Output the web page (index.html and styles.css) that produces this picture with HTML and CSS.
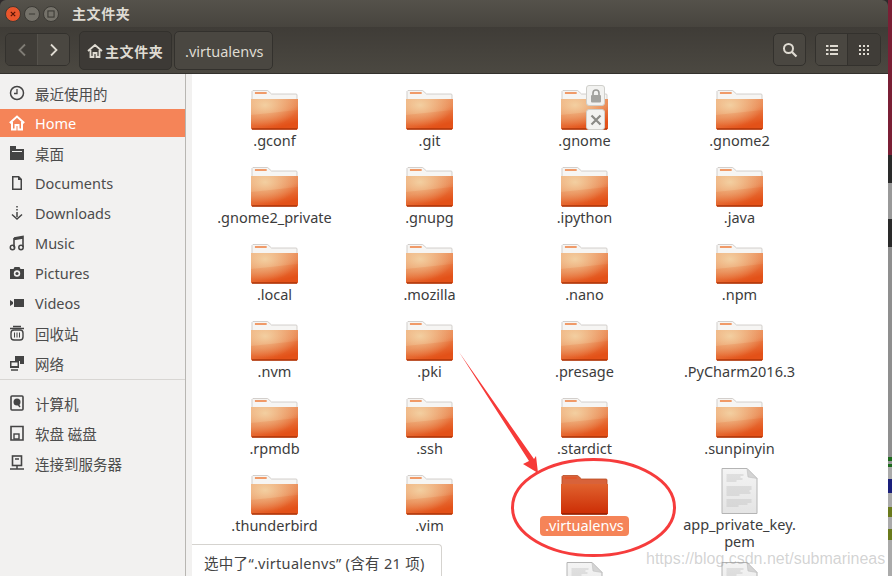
FILE: index.html
```html
<!DOCTYPE html>
<html lang="zh">
<head>
<meta charset="utf-8">
<title>主文件夹</title>
<link rel="stylesheet" href="styles.css">
</head>
<body>
<svg class="defs" width="0" height="0">
  <defs>
    <linearGradient id="fb" x1="0" y1="0" x2="0.45" y2="1">
      <stop offset="0" stop-color="#efa674"/><stop offset="0.55" stop-color="#ea8a55"/><stop offset="1" stop-color="#e4521a"/>
    </linearGradient>
    <radialGradient id="glow" cx="0.3" cy="0.2" r="0.7">
      <stop offset="0" stop-color="#f3d2a4" stop-opacity=".95"/><stop offset="1" stop-color="#f3cf9f" stop-opacity="0"/>
    </radialGradient>
    <linearGradient id="fs" x1="0" y1="0" x2="0" y2="1">
      <stop offset="0" stop-color="#e0622e"/><stop offset="1" stop-color="#cc2c04"/>
    </linearGradient>
    <linearGradient id="dg" x1="0" y1="0" x2="0" y2="1">
      <stop offset="0" stop-color="#f4f4f4"/><stop offset="1" stop-color="#e4e4e4"/>
    </linearGradient>
    <symbol id="folder" viewBox="0 0 48 40" preserveAspectRatio="none">
      <path d="M2 .5h15l4 3.500h25a1 1 0 0 1 1 1V10H1V1.500z" fill="#f6f5f3" stroke="#c8c4c0" stroke-width=".8"/>
      <rect x="4" y="2" width="12" height="2" fill="#f09a68"/>
      <path d="M0 9h48v29.500l-1 1H1l-1-1z" fill="url(#fb)"/>
      <path d="M0 9h48v29.500l-1 1H1l-1-1z" fill="url(#glow)"/>
      <path d="M0 25L48 20v18.500H0z" fill="#e4500f" opacity=".14"/>
      <rect x="1" y="38.300" width="46" height="1.400" fill="#a83208"/>
    </symbol>
    <symbol id="folder-sel" viewBox="0 0 48 40" preserveAspectRatio="none">
      <path d="M2 .5h15l4 3.500h25a1 1 0 0 1 1 1V10H1V1.500z" fill="#d8623a" stroke="#b84a20" stroke-width=".8"/>
      <rect x="4" y="2" width="12" height="2" fill="#e0562a"/>
      <path d="M0 9h48v29.500l-1 1H1l-1-1z" fill="url(#fs)"/>
      <rect x="1" y="38.300" width="46" height="1.400" fill="#8c2004"/>
    </symbol>
    <symbol id="doc" viewBox="0 0 36 46">
      <path d="M.5.5h25l10 10v35H.5z" fill="url(#dg)" stroke="#b4b4b4"/>
      <path d="M25.500.5l1 8.500 9 1.500z" fill="#d4d4d4" stroke="#c0c0c0" stroke-width=".6"/>
      <path d="M5 7h17M5 9h14M5 11h16M5 13h10M5 19h25M5 21h25M5 23h23M5 25h24M5 27h13M5 32h25M5 34h25M5 36h21M5 38h12" stroke="#b4b4b4" stroke-width=".6"/>
    </symbol>
  </defs>
</svg>
<div class="window">
  <header class="titlebar">
    <div class="wm">
      <span class="wm-btn close"><svg viewBox="0 0 16 16"><path d="M5.500 5.500l5 5m0-5l-5 5" stroke="#5a1406" stroke-width="1.400"/></svg></span>
      <span class="wm-btn"><svg viewBox="0 0 16 16"><path d="M4.500 8h7" stroke="#3a3833" stroke-width="1.400"/></svg></span>
      <span class="wm-btn"><svg viewBox="0 0 16 16"><rect x="4.500" y="4.500" width="7" height="7" fill="none" stroke="#3a3833" stroke-width="1.200"/></svg></span>
    </div>
    <span class="title">主文件夹</span>
  </header>
  <div class="toolbar">
    <div class="btn-group nav">
      <span class="tool back"><svg width="10" height="14" viewBox="0 0 10 14"><path d="M8 1.500L2.500 7 8 12.500" fill="none" stroke="#7f7c75" stroke-width="1.800"/></svg></span>
      <span class="tool fwd"><svg width="10" height="14" viewBox="0 0 10 14"><path d="M2 1.500L7.500 7 2 12.500" fill="none" stroke="#dfdbd2" stroke-width="1.800"/></svg></span>
    </div>
    <div class="path">
      <span class="crumb active"><svg width="16" height="14" viewBox="0 0 16 14"><path d="M1 7l7-6 7 6M3.500 6v7h3V9h3v4h3V6" fill="none" stroke="#dfdbd2" stroke-width="1.800"/></svg>主文件夹</span>
      <span class="crumb">.virtualenvs</span>
    </div>
    <div class="spacer"></div>
    <span class="tool-single"><svg width="16" height="16" viewBox="0 0 16 16"><circle cx="6.500" cy="6.500" r="4.500" fill="none" stroke="#dfdbd2" stroke-width="2"/><path d="M10 10l4.500 4.500" stroke="#dfdbd2" stroke-width="2.200"/></svg></span>
    <div class="btn-group views">
      <span class="tool"><svg width="12" height="10" viewBox="0 0 12 10"><path d="M0 1h2.500M4 1h8M0 5h2.500M4 5h8M0 9h2.500M4 9h8" stroke="#dfdbd2" stroke-width="2"/></svg></span>
      <span class="tool on"><svg width="10" height="10" viewBox="0 0 10 10"><path d="M0 1h10M0 5h10M0 9h10" stroke="#dfdbd2" stroke-width="2" stroke-dasharray="2 2"/></svg></span>
    </div>
  </div>
  <div class="body">
    <nav class="sidebar">
      <ul class="places">
        <li><svg class="ic" viewBox="0 0 16 16"><circle cx="8" cy="8" r="6.500" fill="none" stroke="#444" stroke-width="1.500"/><path d="M8 4v4.500H5" fill="none" stroke="#444" stroke-width="1.300"/></svg>最近使用的</li>
        <li class="current"><svg class="ic" viewBox="0 0 16 16"><path d="M.8 8L8 1.500 15.200 8M3 7v7.500h3.500V10h3v4.500H13V7" fill="none" stroke="#fff" stroke-width="2"/></svg>Home</li>
        <li><svg class="ic" viewBox="0 0 16 16"><path d="M1 1h6v3h8v11H1z" fill="#444"/><path d="M3 6h10v1H3z" fill="#f2f1f0"/></svg>桌面</li>
        <li><svg class="ic" viewBox="0 0 16 16"><path d="M3 1h7l3 3v11H3zM4.500 2.500v11h7V5H9V2.500z" fill="#444" fill-rule="evenodd"/></svg>Documents</li>
        <li><svg class="ic" viewBox="0 0 16 16"><path d="M8 1v1.500M8 4v1.500M8 7v5" stroke="#444" stroke-width="1.500"/><path d="M3 9.500L8 14l5-4.500" fill="none" stroke="#444" stroke-width="1.500"/></svg>Downloads</li>
        <li><svg class="ic" viewBox="0 0 16 16"><path d="M5 3l9-1.500V12M5 3v9.500M5 4.500L14 3" fill="none" stroke="#444" stroke-width="1.600"/><circle cx="3.500" cy="12.500" r="2.200" fill="none" stroke="#444" stroke-width="1.500"/><circle cx="12" cy="12.500" r="2.200" fill="none" stroke="#444" stroke-width="1.500"/></svg>Music</li>
        <li><svg class="ic" viewBox="0 0 16 16"><path d="M1 4h3.500l1-2h5l1 2H15v10H1z" fill="#444"/><circle cx="8" cy="8.500" r="3.200" fill="#f2f1f0"/><circle cx="8" cy="8.500" r="1.600" fill="#444"/></svg>Pictures</li>
        <li><svg class="ic" viewBox="0 0 16 16"><rect x="5" y="4" width="10" height="8" fill="#444"/><path d="M1 5v6l3-2V7z" fill="#444"/></svg>Videos</li>
        <li><svg class="ic" viewBox="0 0 16 16"><path d="M4 1.500h8M1 3.500h14" stroke="#444" stroke-width="1.300"/><rect x="2" y="5" width="12" height="10" rx="3" fill="none" stroke="#444" stroke-width="1.400"/><path d="M5.500 7.500v5M8 7.500v5M10.500 7.500v5" stroke="#444"/></svg>回收站</li>
        <li><svg class="ic" viewBox="0 0 16 16"><path d="M6 1h9v8h-4V6H6z" fill="#444"/><rect x="1" y="6" width="9" height="7" fill="#444"/><rect x="2.500" y="7.500" width="6" height="3.500" fill="#f2f1f0"/><path d="M2 15h7" stroke="#444" stroke-width="1.500"/></svg>网络</li>
      </ul>
      <ul class="places devices">
        <li><svg class="ic" viewBox="0 0 16 16"><rect x="2" y="1" width="12" height="14" rx="1" fill="none" stroke="#444" stroke-width="1.600"/><circle cx="8" cy="7" r="3.500" fill="#444"/><path d="M8 8l3 4" stroke="#444" stroke-width="1.400"/></svg>计算机</li>
        <li><svg class="ic" viewBox="0 0 16 16"><path d="M2 1.500h12V15H2z" fill="none" stroke="#444" stroke-width="1.600"/><rect x="5" y="9" width="5" height="5" fill="none" stroke="#444" stroke-width="1.400"/></svg>软盘 磁盘</li>
        <li><svg class="ic" viewBox="0 0 16 16"><rect x="3.500" y="1" width="9" height="9.500" fill="none" stroke="#444" stroke-width="1.600"/><path d="M6 4h4M8 10.500v3M1 14h14" stroke="#444" stroke-width="1.500"/></svg>连接到服务器</li>
      </ul>
    </nav>
    <div class="sash"></div>
    <main class="files">
      <div class="item"><svg class="folder"><use href="#folder"/></svg><span class="name">.gconf</span></div>
      <div class="item"><svg class="folder"><use href="#folder"/></svg><span class="name">.git</span></div>
      <div class="item"><svg class="folder"><use href="#folder"/></svg>
        <span class="emblem lock"><svg width="12" height="14" viewBox="0 0 12 14"><path d="M3 6V4a3 3 0 0 1 6 0v2" fill="none" stroke="#9a9a96" stroke-width="1.600"/><rect x="1" y="6" width="10" height="7.500" rx="1" fill="#a4a4a0"/></svg></span>
        <span class="emblem nowrite"><svg width="12" height="12" viewBox="0 0 12 12"><path d="M1.500 1.500l9 9m0-9l-9 9" stroke="#8a8a86" stroke-width="2.200"/></svg></span>
        <span class="name">.gnome</span></div>
      <div class="item"><svg class="folder"><use href="#folder"/></svg><span class="name">.gnome2</span></div>
      <div class="item"><svg class="folder"><use href="#folder"/></svg><span class="name">.gnome2_private</span></div>
      <div class="item"><svg class="folder"><use href="#folder"/></svg><span class="name">.gnupg</span></div>
      <div class="item"><svg class="folder"><use href="#folder"/></svg><span class="name">.ipython</span></div>
      <div class="item"><svg class="folder"><use href="#folder"/></svg><span class="name">.java</span></div>
      <div class="item"><svg class="folder"><use href="#folder"/></svg><span class="name">.local</span></div>
      <div class="item"><svg class="folder"><use href="#folder"/></svg><span class="name">.mozilla</span></div>
      <div class="item"><svg class="folder"><use href="#folder"/></svg><span class="name">.nano</span></div>
      <div class="item"><svg class="folder"><use href="#folder"/></svg><span class="name">.npm</span></div>
      <div class="item"><svg class="folder"><use href="#folder"/></svg><span class="name">.nvm</span></div>
      <div class="item"><svg class="folder"><use href="#folder"/></svg><span class="name">.pki</span></div>
      <div class="item"><svg class="folder"><use href="#folder"/></svg><span class="name">.presage</span></div>
      <div class="item"><svg class="folder"><use href="#folder"/></svg><span class="name">.PyCharm2016.3</span></div>
      <div class="item"><svg class="folder"><use href="#folder"/></svg><span class="name">.rpmdb</span></div>
      <div class="item"><svg class="folder"><use href="#folder"/></svg><span class="name">.ssh</span></div>
      <div class="item"><svg class="folder"><use href="#folder"/></svg><span class="name">.stardict</span></div>
      <div class="item"><svg class="folder"><use href="#folder"/></svg><span class="name">.sunpinyin</span></div>
      <div class="item"><svg class="folder"><use href="#folder"/></svg><span class="name">.thunderbird</span></div>
      <div class="item"><svg class="folder"><use href="#folder"/></svg><span class="name">.vim</span></div>
      <div class="item"><svg class="folder"><use href="#folder-sel"/></svg><span class="name selected">.virtualenvs</span></div>
      <div class="item tall"><svg class="docicon"><use href="#doc"/></svg><span class="name two-line">app_private_key.<br>pem</span></div>
      <div class="item"></div>
      <div class="item"></div>
      <div class="item"><svg class="docicon"><use href="#doc"/></svg></div>
      <div class="item"><svg class="docicon"><use href="#doc"/></svg></div>
    </main>
  </div>
</div>
<div class="desktop-edge"></div>
<div class="status">选中了“.virtualenvs” (含有 21 项)</div>
<svg class="annotation" width="892" height="576" viewBox="0 0 892 576">
  <path d="M459 352L534 459 536 456 538 473 523 464 529 461z" fill="#f63a38"/>
  <ellipse cx="593.500" cy="507.500" rx="81" ry="48" fill="none" stroke="#f63c3c" stroke-width="3"/>
</svg>
<div class="watermark">https://blog.csdn.net/submarineas</div>
</body>
</html>
```
FILE: styles.css
```css
* { box-sizing: border-box; }
html, body { margin: 0; height: 100%; overflow: hidden; }
body {
  width: 892px; height: 576px; position: relative; background: #2e2a2c;
  font-family: "Noto Sans", "Noto Sans CJK SC", sans-serif; font-size: 14.500px; color: #3c3c3c;
}
.defs { position: absolute; }
.window { width: 888px; height: 576px; display: flex; flex-direction: column; overflow: hidden; border-radius: 6px 6px 0 0; position: relative; z-index: 1; }
.titlebar {
  height: 27px; flex: none; display: flex; align-items: center; padding-left: 5px;
  background: linear-gradient(#55524b, #47443e); color: #dfdbd2;
}
.wm { display: flex; gap: 3px; width: 67px; }
.wm-btn {
  width: 16px; height: 16px; border-radius: 50%; background: #75726a; border: 1px solid #3c3a35; display: block; overflow: hidden;
}
.wm-btn svg { display: block; width: 14px; height: 14px; }
.wm-btn.close { background: #e9562c; }
.title { font-size: 14px; font-weight: 700; letter-spacing: .6px; line-height: 27px; }
.toolbar {
  height: 47px; flex: none; display: flex; align-items: center; padding: 0 7px 1px 5px;
  background: linear-gradient(#3f3c37, #4b4841); border-bottom: 1px solid #33312d;
}
.btn-group { display: flex; height: 33px; border: 1px solid #33312d; border-radius: 5px; overflow: hidden; }
.tool { width: 33px; display: flex; align-items: center; justify-content: center; background: #4a4741; }
.nav .back { width: 32px; background: #403d38; border-right: 1px solid #55524c; }
.nav .fwd { width: 31px; }
.path { display: flex; gap: 1px; margin-left: 9px; height: 41px; padding-top: 2px; }
.crumb {
  height: 39px; display: flex; align-items: center; gap: 2px; color: #dfdbd2;
  border: 1px solid #33312d; border-radius: 5px; background: #4a4741; font-size: 14.500px;
}
.crumb:last-child { padding: 0 8px 0 10px; width: 99px; margin-left: 1px; }
.crumb.active { background: #3d3a36; font-weight: 700; font-size: 14px; letter-spacing: .6px; padding: 0 7px; width: 93px; }
.spacer { flex: 1; }
.tool-single { width: 33px; height: 33px; display: flex; align-items: center; justify-content: center; border: 1px solid #33312d; border-radius: 5px; background: #4a4741; margin-right: 9px; }
.views .tool:first-child { width: 32px; border-right: 1px solid #33312d; }
.views .tool.on { background: #403d38; width: 32px; }
.body { flex: 1; display: flex; min-height: 0; }
.sidebar { width: 186px; flex: none; background: #f2f1f0; border-right: 1px solid #b8b6b2; padding-top: 4px; }
.sash { width: 6px; flex: none; background: #f2f1f0; }
.places { list-style: none; margin: 0; padding: 0; }
.places li { height: 30px; display: flex; align-items: center; gap: 10px; padding-left: 9px; color: #4c4c4c; font-size: 14.500px; }
.places li.current { height: 28px; margin: 1px 0; background: #f58458; color: #fff; }
.devices { border-top: 1px solid #d8d6d3; margin-top: 1px; padding-top: 8px; }
.ic { width: 16px; height: 16px; flex: none; }
.files {
  flex: 1; background: #fff; padding: 16px 0 0 5px; display: grid;
  grid-template-columns: repeat(4, 155px); grid-auto-rows: 77px; align-content: start; overflow: hidden; min-width: 0;
}
.item { position: relative; display: flex; flex-direction: column; align-items: center; }
.item.tall { height: 87px; }
.folder { width: 47px; height: 40px; display: block; flex: none; }
.docicon { width: 37px; height: 46px; flex: none; display: block; margin-top: -7px; margin-bottom: 1px; }
.files .item:nth-child(n+25) { margin-top: 17px; }
.name { font-size: 14.500px; line-height: 18px; margin-top: 1px; color: #3c3c3c; text-align: center; white-space: nowrap; }
.name.two-line { line-height: 17px; }
.name.selected { background: #f58458; color: #fff; border-radius: 4px; padding: 0 5px; height: 20px; margin-top: 1px; line-height: 19px; width: 89px; }
.emblem {
  position: absolute; left: 79px; width: 19px; height: 21px; background: #f2f2f0; border: 1px solid #cfcfcb; border-radius: 3px;
  display: flex; align-items: center; justify-content: center;
}
.emblem.lock { top: -5px; }
.emblem.nowrite { top: 19px; }
.desktop-edge {
  position: absolute; right: 0; top: 0; width: 4px; height: 576px;
  background: linear-gradient(#7a1f35 0 155px, #2a2a2a 155px 183px, #999 183px 219px, #2a2a2a 219px 247px, #8f8f8f 247px 457px, #1c6a1c 457px 461px, #999 461px 464px, #1c6a1c 464px 467px, #aaa 467px 479px, #1a1f7a 479px 493px, #aaa 493px 507px, #6a7a1c 507px 517px, #aaa 517px 529px, #6a7a1c 529px 540px, #aaa 540px);
}
.status {
  position: absolute; z-index: 2; left: 192px; top: 544px; width: 250px; height: 32px; padding: 7px 0 0 12px;
  background: #fff; border: 1px solid #d5d3cf; border-left: 0; border-bottom: 0; border-radius: 0 4px 0 0; font-size: 14.500px; letter-spacing: .3px; color: #444; white-space: nowrap;
}
.annotation { position: absolute; z-index: 3; left: 0; top: 0; pointer-events: none; }
.watermark {
  position: absolute; z-index: 3; left: 646px; top: 552px; font-family: "Liberation Sans", sans-serif; font-size: 16px; line-height: 13px;
  color: rgba(150, 150, 150, .42); white-space: nowrap;
}
```
